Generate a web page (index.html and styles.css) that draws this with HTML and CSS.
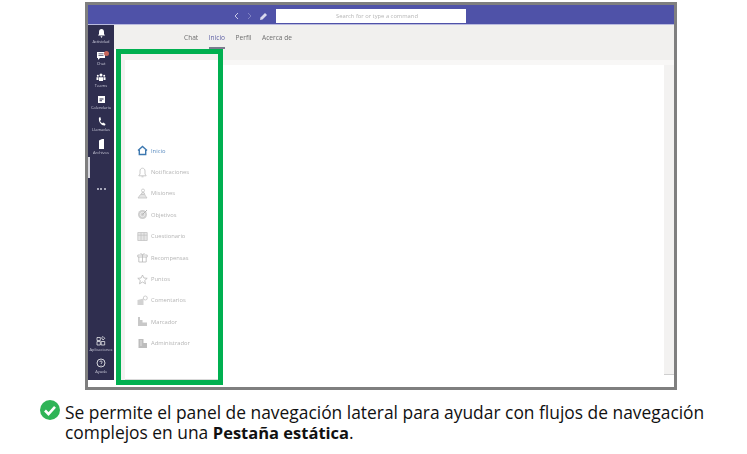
FILE: index.html
```html
<html>
  <head>
    <title>Pestaña estática</title>
    <link rel="stylesheet" href="styles.css">
  </head>
  <body>
    <div class="frame">
      <div class="topBar">
        <svg class="arrows" width="20" height="10" viewBox="0 0 20 10"><path d="M5 2 2 5l3 3" class="arrowLine"/><path d="M15 2l3 3-3 3" class="arrowLine dim"/></svg>
        <svg class="pencil" width="9" height="9" viewBox="0 0 9 9"><path d="M1 8l.5-2.500L6 1l2 2-4.500 4.500z" fill="#d9d9ee"/></svg>
        <div class="searchBox">Search for or type a command</div>
      </div>
      <div class="shell">
        <div class="rail">
          <i class="railMark"></i>
          <div class="railItem">
            <svg width="9" height="9" viewBox="0 0 9 9"><path d="M4.500 0C3 0 2 1.200 2 3v2L1 6.500h7L7 5V3C7 1.200 6 0 4.500 0zM3.500 7.300h2L4.500 9z" fill="#fff"/></svg>
            <span>Actividad</span>
          </div>
          <div class="railItem">
            <svg width="9" height="9" viewBox="0 0 9 9"><path d="M0 1h8v6H3L1 9V7H0z" fill="#fff"/><path d="M1.500 2.800h5M1.500 4.500h5" stroke="#2f2e4f" stroke-width=".7"/></svg>
            <span>Chat</span>
            <i class="badge"></i>
          </div>
          <div class="railItem">
            <svg width="10" height="9" viewBox="0 0 10 9"><circle cx="5" cy="2" r="1.500" fill="#fff"/><circle cx="1.800" cy="2.800" r="1" fill="#fff"/><circle cx="8.200" cy="2.800" r="1" fill="#fff"/><path d="M3 4.300h4V8H3zM.5 4.300h2V7h-2zM7.500 4.300h2V7h-2z" fill="#fff"/></svg>
            <span>Teams</span>
          </div>
          <div class="railItem">
            <svg width="9" height="9" viewBox="0 0 9 9"><path d="M1 1h7v7H1z" fill="#fff"/><path d="M2.500 3.500h4v1h-4zM2.500 5.300h2.500v1h-2.500z" fill="#2f2e4f"/></svg>
            <span>Calendario</span>
          </div>
          <div class="railItem">
            <svg width="9" height="9" viewBox="0 0 9 9"><path d="M2 .5 3.500 .2 4 3 3 3.800C3.400 5 4.200 5.800 5.200 6.300L6.200 5.500 8.500 7 8 8.500C4.500 9 1.200 5 2 .5z" fill="#fff"/></svg>
            <span>Llamadas</span>
          </div>
          <div class="railItem">
            <svg width="9" height="10" viewBox="0 0 9 10"><path d="M2 1.500 5 0h2v10H2z" fill="#fff"/></svg>
            <span>Archivos</span>
          </div>
          <div class="railDots">
            <i></i><i></i><i></i>
          </div>
          <div class="railItem railBottom">
            <svg width="10" height="10" viewBox="0 0 10 10"><path d="M1 1.500h3.300v3H1zM1 5.500h3.300v3.500H1zM5.200 5.500h3.500v3.500H5.200zM5.500 1.800 7 .5l1.800 1.800L7 4z" fill="none" stroke="#fff" stroke-width=".7"/></svg>
            <span>Aplicaciones</span>
          </div>
          <div class="railItem">
            <svg width="10" height="10" viewBox="0 0 10 10"><circle cx="5" cy="5" r="4" fill="none" stroke="#fff" stroke-width=".8"/><path d="M3.800 4c0-1.500 2.400-1.500 2.400 0 0 1-1.200 1-1.200 2M5 7v.6" fill="none" stroke="#fff" stroke-width=".7"/></svg>
            <span>Ayuda</span>
          </div>
        </div>
        <div class="main">
          <div class="tabs">
            <span class="tab">Chat</span>
            <span class="tab active">Inicio</span>
            <span class="tab">Perfil</span>
            <span class="tab">Acerca de</span>
          </div>
          <div class="stage">
            <div class="greenBox">
              <div class="sideNav">
                <div class="navItem current">
                  <svg width="11" height="11" viewBox="0 0 11 11"><path d="M1 5.500 5.500 1.500 10 5.500M2.300 5v4.500h6.400V5" fill="none" stroke="#3d78b0" stroke-width="1.400"/></svg>
                  <span>Inicio</span>
                </div>
                <div class="navItem">
                  <svg width="11" height="11" viewBox="0 0 11 11"><path d="M5.500 1.200C4 1.200 3 2.400 3 4v3L1.800 8.800h7.400L8 7V4C8 2.400 7 1.200 5.500 1.200zM4.500 9.800h2" fill="none" stroke="#c4c4c4" stroke-width=".9"/></svg>
                  <span>Notificaciones</span>
                </div>
                <div class="navItem">
                  <svg width="11" height="11" viewBox="0 0 11 11"><circle cx="6" cy="2.500" r="1.500" fill="none" stroke="#c4c4c4" stroke-width=".8"/><path d="M1 10l2.500-3.500h4L10 10zM4 6.500l1-2h2l1 2" fill="#e4e4e4" stroke="#c4c4c4" stroke-width=".8"/></svg>
                  <span>Misiones</span>
                </div>
                <div class="navItem">
                  <svg width="11" height="11" viewBox="0 0 11 11"><circle cx="5.500" cy="5.500" r="4.500" fill="#cfcfcf"/><circle cx="5.500" cy="5.500" r="2.200" fill="none" stroke="#f2f2f2" stroke-width=".8"/><path d="M5.500 5.500 10 1" stroke="#a8a8a8" stroke-width=".8"/></svg>
                  <span>Objetivos</span>
                </div>
                <div class="navItem">
                  <svg width="11" height="11" viewBox="0 0 11 11"><path d="M.8 1.500h9.400v8H.8zM4 1.500v8M7 1.500v8M.8 4.200h9.400" fill="#e6e6e6" stroke="#c4c4c4" stroke-width=".8"/></svg>
                  <span>Cuestionario</span>
                </div>
                <div class="navItem">
                  <svg width="11" height="11" viewBox="0 0 11 11"><path d="M.8 3h9.400v2H.8zM1.800 5v5h7.400V5M5.500 3v7M5.500 3 3.500 1M5.500 3l2-2" fill="none" stroke="#b8b8b8" stroke-width=".8"/></svg>
                  <span>Recompensas</span>
                </div>
                <div class="navItem">
                  <svg width="11" height="11" viewBox="0 0 11 11"><path d="M5.500 1 6.900 4 10.200 4.300 7.700 6.500 8.500 9.800 5.500 8 2.500 9.800 3.300 6.500 .8 4.300 4.100 4z" fill="none" stroke="#b8b8b8" stroke-width=".8"/></svg>
                  <span>Puntos</span>
                </div>
                <div class="navItem">
                  <svg width="11" height="11" viewBox="0 0 11 11"><path d="M.5 5 6.500 3.500v6.500h-6z" fill="#d2d2d2"/><circle cx="8.300" cy="3" r="2" fill="none" stroke="#c4c4c4" stroke-width=".8"/></svg>
                  <span>Comentarios</span>
                </div>
                <div class="navItem">
                  <svg width="11" height="11" viewBox="0 0 11 11"><path d="M1 1h2v9H1zM3 4h2.500v6H3zM5.500 6.500H10V10H5.500z" fill="#c8c8c8"/></svg>
                  <span>Marcador</span>
                </div>
                <div class="navItem">
                  <svg width="11" height="11" viewBox="0 0 11 11"><path d="M1.500 1h5v9h-5zM6.500 5H10v5H6.500z" fill="#bdbdbd"/><path d="M3 3h2M3 5h2M3 7h2" stroke="#eee" stroke-width=".7"/></svg>
                  <span>Administrador</span>
                </div>
              </div>
            </div>
            <div class="canvas">
              <div class="canvasTop"></div>
              <div class="canvasBody">
                <div class="canvasWhite"></div>
                <div class="canvasStrip"></div>
              </div>
            </div>
          </div>
        </div>
      </div>
    </div>
    <div class="caption">
      <svg class="checkIcon" width="20" height="20" viewBox="0 0 20 20"><circle cx="10" cy="10" r="10" fill="#2fb457"/><path d="M5 10.500 8.500 14 15 6.800" fill="none" stroke="#fff" stroke-width="2.600"/></svg>
      <p>Se permite el panel de navegación lateral para ayudar con flujos de navegación complejos en una <b>Pestaña estática</b>.</p>
    </div>
  </body>
</html>
```

FILE: styles.css
```css
html, body {
  margin: 0;
  padding: 0;
  background-color: white;
}

body {
  padding-top: 2px;
  font-family: "Open Sans", "Noto Sans", sans-serif;
}

.frame {
  box-sizing: border-box;
  width: 592px;
  height: 388px;
  margin-left: 85px;
  border: 3px solid #7f7f7f;
  background-color: white;
}

.topBar {
  display: flex;
  align-items: center;
  height: 20px;
  padding: 3px 0 0 145px;
  background-color: #4f52a8;
  border-bottom: 1px solid #b9bade;
  box-sizing: border-box;
  filter: blur(0.3px);
}

.arrowLine {
  fill: none;
  stroke: #c9cae8;
  stroke-width: 1;
}

.dim {
  stroke: #8082c2;
}

.arrows {
  margin-right: 6px;
}

.pencil {
  margin-right: 8px;
}

.searchBox {
  box-sizing: border-box;
  width: 190px;
  height: 14px;
  padding-left: 12px;
  background-color: white;
  color: #b5b5b5;
  font-size: 5.8px;
  line-height: 14px;
  text-align: center;
}

.shell {
  display: flex;
  height: 362px;
}

.rail {
  position: relative;
  display: flex;
  flex-direction: column;
  box-sizing: border-box;
  width: 26px;
  height: 355px;
  padding-top: 4px;
  background-color: #2f2e4f;
  filter: blur(0.3px);
}

.railMark {
  position: absolute;
  top: 132px;
  left: 0;
  width: 2px;
  height: 21px;
  background-color: #d8d8e0;
}

.railItem {
  position: relative;
  display: flex;
  flex-direction: column;
  align-items: center;
  height: 22px;
  color: #c8c8d8;
  font-size: 4px;
  line-height: 5px;
  white-space: nowrap;
}

.railItem svg {
  flex: none;
  margin-bottom: 1px;
}

.badge {
  position: absolute;
  top: 0;
  left: 16px;
  width: 5px;
  height: 5px;
  border-radius: 50%;
  background-color: #c9665a;
}

.railDots {
  display: flex;
  justify-content: center;
  gap: 1.500px;
  margin-top: 27px;
}

.railDots i {
  width: 2px;
  height: 2px;
  border-radius: 50%;
  background-color: #d0d0dc;
}

.railBottom {
  margin-top: auto;
}

.main {
  display: flex;
  flex-direction: column;
  flex: 1;
}

.tabs {
  display: flex;
  gap: 10.500px;
  box-sizing: border-box;
  height: 24px;
  padding-left: 70px;
  background-color: #f1f0ee;
  filter: blur(0.25px);
}

.tab {
  padding-top: 8px;
  color: #6e6e6e;
  font-family: "Open Sans", sans-serif;
  font-size: 6.6px;
  line-height: 10px;
}

.active {
  height: 24px;
  box-sizing: border-box;
  border-bottom: 2px solid #7b7b8e;
  color: #6264a7;
}

.stage {
  display: flex;
  flex: 1;
  background-color: white;
}

.greenBox {
  box-sizing: border-box;
  width: 107px;
  height: 336px;
  margin-left: 2px;
  padding: 6px 0 0 4px;
  border: 5px solid #00b050;
  background-color: #f3f2f1;
}

.sideNav {
  box-sizing: border-box;
  height: 320px;
  padding: 80px 0 0 12px;
  background-color: white;
  border-bottom: 1px solid #d9d9d9;
  filter: blur(0.3px);
}

.navItem {
  display: flex;
  align-items: center;
  gap: 3px;
  height: 21.4px;
  color: #b5b5b5;
  font-family: "Open Sans", sans-serif;
  font-size: 5.800px;
}

.current {
  color: #5b8cc0;
}

.canvas {
  flex: 1;
}

.canvasTop {
  height: 16px;
  background: linear-gradient(#f1f0ee 11px, #f8f7f6 11px);
}

.canvasBody {
  display: flex;
  height: 310px;
}

.canvasWhite {
  flex: 1;
  background-color: white;
}

.canvasStrip {
  width: 10px;
  background-color: #f3f2f1;
  border-bottom: 1px solid #cfcfcf;
}

.caption {
  display: flex;
  gap: 5px;
  margin: 10px 0 0 40px;
}

.checkIcon {
  flex: none;
}

.caption p {
  width: 665px;
  margin: 2px 0 0 0;
  color: #111;
  font-size: 17.400px;
  line-height: 20px;
}

.caption b {
  font-size: 16.500px;
}
```
